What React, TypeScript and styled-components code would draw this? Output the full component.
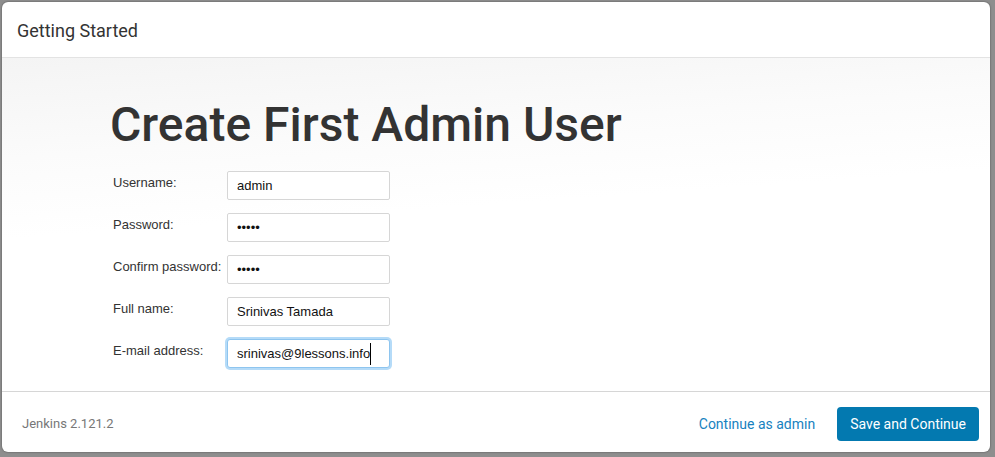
import styled, { createGlobalStyle } from 'styled-components';

const GlobalStyle = createGlobalStyle`
  html, body {
    margin: 0;
    padding: 0;
    background: #8e8e8e;
  }
  * {
    box-sizing: border-box;
  }
`;

const fields = [
  { label: 'Username:', value: 'admin', type: 'text' },
  { label: 'Password:', value: 'admin', type: 'password' },
  { label: 'Confirm password:', value: 'admin', type: 'password' },
  { label: 'Full name:', value: 'Srinivas Tamada', type: 'text' },
  { label: 'E-mail address:', value: 'srinivas@9lessons.info', type: 'text', focused: true },
];

const App = () => {
  return (
    <>
      <GlobalStyle />
      <Screen>
        <Dialog>
          <Header>
            <HeaderTitle>Getting Started</HeaderTitle>
          </Header>
          <Body>
            <Heading>Create First Admin User</Heading>
            <FormTable>
              <tbody>
                {fields.map((f) => (
                  <Row key={f.label}>
                    <LabelCell>{f.label}</LabelCell>
                    <InputCell>
                      <InputWrap>
                        <Input
                          type={f.type}
                          defaultValue={f.value}
                          $focused={!!f.focused}
                          readOnly
                        />
                        {f.focused && <Caret />}
                      </InputWrap>
                    </InputCell>
                  </Row>
                ))}
              </tbody>
            </FormTable>
          </Body>
          <Footer>
            <Version>Jenkins 2.121.2</Version>
            <Actions>
              <LinkButton>Continue as admin</LinkButton>
              <PrimaryButton>Save and Continue</PrimaryButton>
            </Actions>
          </Footer>
        </Dialog>
      </Screen>
    </>
  );
};

const Screen = styled.div`
  width: 995px;
  height: 457px;
  padding: 2px 5px 5px 2px;
`;

const Dialog = styled.div`
  display: flex;
  flex-direction: column;
  height: 100%;
  background: #fff;
  border-radius: 6px;
  overflow: hidden;
  box-shadow: 0 0 2px rgba(0, 0, 0, 0.5);
  font-family: Roboto, 'Liberation Sans', sans-serif;
  color: #333;
`;

const Header = styled.div`
  display: flex;
  align-items: center;
  height: 56px;
  padding: 2px 15px 0;
  border-bottom: 1px solid #e3e3e3;
  flex-shrink: 0;
`;

const HeaderTitle = styled.h2`
  margin: 0;
  font-size: 18px;
  font-weight: 400;
  color: #333;
`;

const Body = styled.div`
  flex: 1;
  padding: 38px 108px 0;
  background: linear-gradient(176deg, #f4f4f4 0%, #fbfbfb 25%, #fff 45%);
`;

const Heading = styled.h1`
  margin: 0 0 17px;
  font-size: 48px;
  font-weight: 500;
  line-height: 1.2;
  color: #333;
`;

const FormTable = styled.table`
  border-collapse: collapse;
  font-family: 'Liberation Sans', Arial, sans-serif;
  font-size: 13px;
`;

const Row = styled.tr`
  height: 42px;
`;

const LabelCell = styled.td`
  width: 117px;
  padding: 4px 0 0 3px;
  vertical-align: top;
  color: #333;
  white-space: nowrap;
`;

const InputCell = styled.td`
  vertical-align: top;
  padding: 0;
`;

const InputWrap = styled.div`
  position: relative;
  width: 163px;
`;

const Input = styled.input<{ $focused: boolean }>`
  display: block;
  width: 163px;
  height: 29px;
  padding: 0 9px;
  font-family: 'Liberation Sans', Arial, sans-serif;
  font-size: 13px;
  color: #111;
  background: #fff;
  border: 1px solid ${(p) => (p.$focused ? '#8ec5ef' : '#d6d6d6')};
  border-radius: ${(p) => (p.$focused ? '3px' : '2px')};
  outline: none;
  box-shadow: ${(p) => (p.$focused ? '0 0 0 2px #b5dbf8' : 'none')};
`;

const Caret = styled.span`
  position: absolute;
  left: 143px;
  top: 4px;
  width: 1px;
  height: 22px;
  background: #000;
`;

const Footer = styled.div`
  display: flex;
  align-items: center;
  justify-content: space-between;
  height: 61px;
  padding: 3px 11px 0 20px;
  border-top: 1px solid #d6d6d6;
  flex-shrink: 0;
`;

const Version = styled.span`
  font-size: 13px;
  color: #777;
`;

const Actions = styled.div`
  display: flex;
  align-items: center;
  gap: 22px;
`;

const LinkButton = styled.button`
  border: none;
  background: none;
  padding: 0;
  font-family: Roboto, 'Liberation Sans', sans-serif;
  font-size: 14px;
  color: #1782c0;
  cursor: pointer;
`;

const PrimaryButton = styled.button`
  height: 34px;
  padding: 0 13px;
  border: none;
  border-radius: 4px;
  background: #0379b0;
  color: #fff;
  font-family: Roboto, 'Liberation Sans', sans-serif;
  font-size: 14px;
  cursor: pointer;
`;

export default App;
